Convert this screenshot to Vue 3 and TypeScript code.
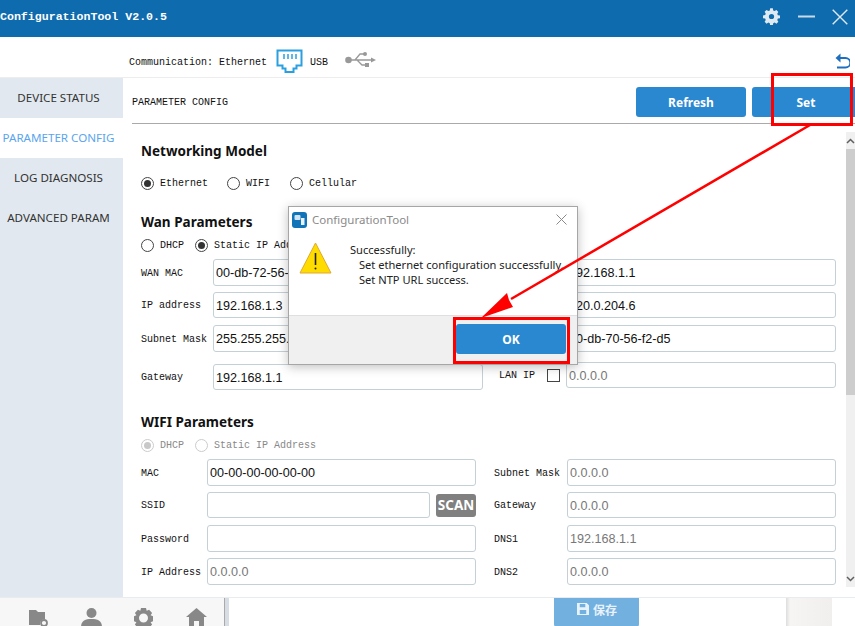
<script setup lang="ts">
interface Field { label: string; value: string; muted?: boolean; top: number; h: number; check?: boolean; scan?: boolean }
const nav = ['DEVICE STATUS', 'PARAMETER CONFIG', 'LOG DIAGNOSIS', 'ADVANCED PARAM']
const wanLeft: Field[] = [
  { label: 'WAN MAC', value: '00-db-72-56-f2-d5', top: 0, h: 27 },
  { label: 'IP address', value: '192.168.1.3', top: 6, h: 26 },
  { label: 'Subnet Mask', value: '255.255.255.0', top: 7, h: 27 },
  { label: 'Gateway', value: '192.168.1.1', top: 12, h: 26 },
]
const wanRight: Field[] = [
  { label: 'Gateway', value: '192.168.1.1', top: 0, h: 27 },
  { label: 'DNS', value: '120.0.204.6', top: 6, h: 26 },
  { label: 'MAC', value: '00-db-70-56-f2-d5', top: 7, h: 27 },
  { label: 'LAN IP', value: '0.0.0.0', muted: true, top: 10, h: 26, check: true },
]
const wifiLeft: Field[] = [
  { label: 'MAC', value: '00-00-00-00-00-00', top: 0, h: 27 },
  { label: 'SSID', value: '', top: 6, h: 26, scan: true },
  { label: 'Password', value: '', top: 7, h: 27 },
  { label: 'IP Address', value: '0.0.0.0', muted: true, top: 6, h: 27 },
]
const wifiRight: Field[] = [
  { label: 'Subnet Mask', value: '0.0.0.0', muted: true, top: 0, h: 27 },
  { label: 'Gateway', value: '0.0.0.0', muted: true, top: 6, h: 26 },
  { label: 'DNS1', value: '192.168.1.1', muted: true, top: 7, h: 27 },
  { label: 'DNS2', value: '0.0.0.0', muted: true, top: 6, h: 27 },
]
const columns = [
  { cls: 'wan-left', rows: wanLeft },
  { cls: 'wan-right', rows: wanRight },
]
const wifiColumns = [
  { cls: 'wifi-left', rows: wifiLeft },
  { cls: 'wifi-right', rows: wifiRight },
]
</script>

<template>
  <div class="app">
    <header class="title">
      <span class="title-text">ConfigurationTool V2.0.5</span>
      <div class="win-icons">
        <svg class="gear" width="17" height="17" viewBox="0 0 24 24"><path fill="#dfe9f2" fill-rule="evenodd" d="M13.900 .5l.5 3 2 .9 2.600-1.600 2.700 2.700-1.600 2.600.9 2 3 .5v3.800l-3 .5-.9 2 1.600 2.600-2.700 2.700-2.600-1.600-2 .9-.5 3h-3.800l-.5-3-2-.9L5 22.100l-2.700-2.700 1.600-2.600-.9-2-3-.5V10.500l3-.5.9-2L2.300 5.400 5 2.700l2.600 1.600 2-.9.5-3z M12 8.300a3.700 3.700 0 1 0 0 7.400 3.700 3.700 0 0 0 0-7.400z"/></svg>
        <svg width="17" height="3" viewBox="0 0 17 3"><rect width="17" height="2" y="0.500" fill="#c9dbea"/></svg>
        <svg width="16" height="16" viewBox="0 0 16 16"><path d="M.7.7l14.600 14.600M15.300.7L.7 15.300" stroke="#dfe9f2" stroke-width="1.400" fill="none"/></svg>
      </div>
    </header>

    <div class="comm">
      <span class="mono comm-label">Communication: Ethernet</span>
      <svg class="eth" width="27" height="25" viewBox="0 0 27 25"><path d="M1.500 1.500h24v15h-5v3h-3v3.500h-8v-3.500h-3v-3h-5z" fill="none" stroke="#2aa0e0" stroke-width="2"/><path d="M8 5v5M12 5v5M16 5v5M20 5v5" stroke="#2aa0e0" stroke-width="1.500"/></svg>
      <span class="mono usb-label">USB</span>
      <svg class="usb" width="31" height="18" viewBox="0 0 31 18"><circle cx="3.500" cy="9" r="3.300" fill="#999"/><path d="M3 9h25M10 9l5-6h4M12 9l5 5h4" stroke="#999" stroke-width="1.300" fill="none"/><circle cx="20" cy="3" r="2" fill="#999"/><rect x="20" y="12" width="4" height="4" fill="#999"/><path d="M26 6.500l5 2.500-5 2.500z" fill="#999"/></svg>
      <svg class="undo" width="15" height="16" viewBox="0 0 15 16"><path d="M3 5h7.500a3.700 3.700 0 0 1 0 9.500H2" stroke="#1f6fc0" stroke-width="1.800" fill="none"/><path d="M5.500 .5L.5 5l5 4.500z" fill="#1f6fc0"/></svg>
    </div>

    <div class="body">
      <nav class="side">
        <div v-for="(n, i) in nav" :key="n" class="nav-item" :class="{ active: i === 1 }">{{ n }}</div>
      </nav>
      <main class="main">
        <div class="main-head">
          <span class="mono head-label">PARAMETER CONFIG</span>
          <button class="btn refresh">Refresh</button>
          <button class="btn set">Set</button>
        </div>
        <div class="scroll">
          <div class="form">
            <h3 class="h-net">Networking Model</h3>
            <div class="radios net">
              <label class="radio on r-eth"><i></i>Ethernet</label>
              <label class="radio r-wifi"><i></i>WIFI</label>
              <label class="radio"><i></i>Cellular</label>
            </div>
            <h3 class="h-wan">Wan Parameters</h3>
            <div class="radios wan-r">
              <label class="radio r-dhcp"><i></i>DHCP</label>
              <label class="radio on"><i></i>Static IP Address</label>
            </div>
            <div class="cols wan">
              <div v-for="c in columns" :key="c.cls" class="col" :class="c.cls">
                <div v-for="r in c.rows" :key="r.label" class="row" :style="{ marginTop: r.top + 'px', height: r.h + 'px' }">
                  <span class="mono lbl">{{ r.label }}</span>
                  <span v-if="r.check" class="check"></span>
                  <div class="inp" :class="{ muted: r.muted }">{{ r.value }}</div>
                </div>
              </div>
            </div>
            <h3 class="h-wifi">WIFI Parameters</h3>
            <div class="radios wifi-r disabled">
              <label class="radio on r-dhcp2"><i></i>DHCP</label>
              <label class="radio"><i></i>Static IP Address</label>
            </div>
            <div class="cols wifi">
              <div v-for="c in wifiColumns" :key="c.cls" class="col" :class="c.cls">
                <div v-for="r in c.rows" :key="r.label" class="row" :style="{ marginTop: r.top + 'px', height: r.h + 'px' }">
                  <span class="mono lbl">{{ r.label }}</span>
                  <div class="inp" :class="{ muted: r.muted }">{{ r.value }}</div>
                  <span v-if="r.scan" class="scan">SCAN</span>
                </div>
              </div>
            </div>
          </div>
          <div class="scrollbar">
            <div class="sb-btn"><svg width="9" height="6" viewBox="0 0 9 6"><path d="M1 5l3.500-3.500L8 5" stroke="#606060" stroke-width="1.500" fill="none"/></svg></div>
            <div class="sb-track"><div class="sb-thumb"></div></div>
            <div class="sb-btn"><svg width="9" height="6" viewBox="0 0 9 6"><path d="M1 1l3.500 3.500L8 1" stroke="#606060" stroke-width="1.500" fill="none"/></svg></div>
          </div>
        </div>
      </main>
    </div>

    <footer class="foot">
      <div class="foot-left">
        <svg width="21" height="19" viewBox="0 0 21 19"><path d="M1 2h7l2 2h7v7a5 5 0 0 0-5 6H1z" fill="#888"/><circle cx="16" cy="15" r="3" fill="none" stroke="#888" stroke-width="1.800"/></svg>
        <svg width="21" height="19" viewBox="0 0 21 19"><circle cx="10.500" cy="5" r="5" fill="#888"/><path d="M0 19c0-6 4-8 10.500-8S21 13 21 19z" fill="#888"/></svg>
        <svg width="21" height="19" viewBox="0 0 21 19"><path fill="#888" fill-rule="evenodd" d="M8 0h5l.7 2.700 2.400-1 3 3.300-1.500 2.300 2.400 1v5l-2.400 1 1.500 2.300-3 3.400H4.900l-3-3.400 1.500-2.300-2.400-1V8.300l2.400-1L1.900 5l3-3.300 2.400 1z M10.500 5.500a4.500 4.500 0 1 0 0 9 4.500 4.500 0 0 0 0-9z"/></svg>
        <svg width="21" height="19" viewBox="0 0 21 19"><path d="M10.500 0L21 9h-3v10h-5v-6H8v6H3V9H0z" fill="#888"/></svg>
      </div>
      <div class="foot-strip"></div>
      <div class="foot-mid">
        <button class="save">
          <svg width="12" height="12" viewBox="0 0 13 13"><path fill="#e8f2fa" fill-rule="evenodd" d="M0 0h10.500L13 2.500V13H0z M3 1v3.500h6V1z M3 7.500V12h7V7.500z"/></svg>
          <span>保存</span>
        </button>
      </div>
      <div class="foot-blob"></div>
    </footer>

    <section class="dialog">
      <div class="dlg-title">
        <svg width="15" height="16" viewBox="0 0 15 16"><rect width="15" height="16" rx="3" fill="#1173b8"/><rect x="2.500" y="3" width="6" height="5" rx="1" fill="#cfe3f2"/><rect x="9" y="6" width="3.500" height="7" fill="#e8f2fa"/></svg>
        <span class="dlg-name">ConfigurationTool</span>
        <svg class="dlg-x" width="11" height="11" viewBox="0 0 11 11"><path d="M.5.5l10 10M10.500.5l-10 10" stroke="#8a8a8a" stroke-width="1" fill="none"/></svg>
      </div>
      <div class="dlg-body">
        <svg width="33" height="32" viewBox="0 0 33 32"><path d="M16.500 1L32 31H1z" fill="#ffdc00" stroke="#e0a830" stroke-width="1"/><path d="M16.500 11v12" stroke="#222" stroke-width="1.600"/><circle cx="16.500" cy="26.500" r="1" fill="#222"/></svg>
        <div class="dlg-msg">
          <div>Successfully:</div>
          <div class="ind">Set ethernet configuration successfully.</div>
          <div class="ind">Set NTP URL success.</div>
        </div>
      </div>
      <div class="dlg-foot"><button class="btn ok">OK</button></div>
    </section>

    <svg class="marks" width="855" height="626" viewBox="0 0 855 626">
      <rect x="772.500" y="74.500" width="79" height="50" fill="none" stroke="#f00" stroke-width="3"/>
      <rect x="454.500" y="318.500" width="114" height="44" fill="none" stroke="#f00" stroke-width="3"/>
      <path d="M810 125L511 299" stroke="#f00" stroke-width="2.500" fill="none"/>
      <path d="M481 318L507 293L509 300L513 307z" fill="#f00"/>
    </svg>
  </div>
</template>

<style>
html, body { margin: 0; background: #fff; overflow: hidden; }
</style>

<style scoped>
.app { position: relative; width: 855px; height: 626px; overflow: hidden; background: #fff; font-family: "Noto Sans", sans-serif; display: flex; flex-direction: column; color: #111; }
.mono { font-family: "Liberation Mono", monospace; font-size: 10px; }
.title { height: 37px; background: #0e6bae; display: flex; align-items: center; justify-content: space-between; flex: none; }
.title-text { font: bold 11.600px "Liberation Mono", monospace; color: #fff; margin-top: -4px; }
.win-icons { display: flex; align-items: center; gap: 17px; padding-right: 7px; margin-top: -4px; }
.win-icons svg:nth-child(2) { margin-left: 1px; }
.comm { height: 41px; flex: none; border-bottom: 1px solid #ededed; display: flex; align-items: center; padding: 10px 0 0 129px; box-sizing: border-box; position: relative; }
.comm-label { width: 147px; margin-top: 1px; }
.eth { margin-right: 7px; margin-top: -1px; }
.usb-label { width: 35px; }
.usb { margin-top: -4px; }
.undo { margin-left: auto; margin-right: 5px; margin-top: -3px; }
.body { flex: 1; min-height: 0; display: flex; }
.side { width: 123px; flex: none; background: #e1e8ef; }
.nav-item { height: 40px; display: flex; align-items: center; justify-content: center; font-size: 11.600px; color: #333; padding: 0 6px 1px 0; box-sizing: border-box; white-space: nowrap; }
.nav-item.active { background: #fff; color: #5aa5ee; }
.main { flex: 1; min-width: 0; display: flex; flex-direction: column; }
.main-head { height: 46px; margin-left: 9px; border-bottom: 1px solid #aaa; display: flex; align-items: center; flex: none; padding-top: 3px; box-sizing: border-box; }
.head-label { margin-right: auto; }
.btn { border: none; background: #2a88d0; color: #fff; font: bold 12px "Noto Sans", sans-serif; border-radius: 3px; padding: 0; }
.refresh { width: 110px; height: 30px; margin-right: 6px; }
.set { width: 108px; height: 30px; flex: none; margin-right: -5px; }
.scroll { flex: 1; min-height: 0; display: flex; }
.form { width: 723px; padding-left: 18px; box-sizing: border-box; flex: none; }
h3 { margin: 0; font-size: 13.500px; font-weight: 700; color: #111; height: 20px; line-height: 20px; }
.h-net { margin-top: 17px; }
.radios { display: flex; align-items: center; font: 10px "Liberation Mono", monospace; height: 14px; }
.net { margin-top: 15px; }
.radio { display: flex; align-items: center; gap: 6px; }
.radio i { width: 11px; height: 11px; border: 1px solid #444; border-radius: 50%; background: #fff; position: relative; display: block; }
.radio.on i::after { content: ""; position: absolute; left: 2px; top: 2px; width: 7px; height: 7px; border-radius: 50%; background: #333; }
.r-eth { margin-right: 19px; }
.r-wifi { margin-right: 20px; }
.h-wan { margin-top: 22px; }
.wan-r { margin-top: 6px; }
.r-dhcp { margin-right: 11px; }
.cols { display: flex; }
.wan { margin-top: 7px; }
.col { flex: none; }
.row { display: flex; align-items: center; }
.lbl { white-space: nowrap; padding-top: 1px; }
.inp { height: 100%; box-sizing: border-box; border: 1px solid #c3d0d5; border-radius: 3px; padding-left: 2px; font: 12.600px/26px "Liberation Sans", sans-serif; color: #111; background: #fff; white-space: nowrap; overflow: hidden; }
.inp.muted { color: #777; }
.wan-left { width: 358px; }
.wan-left .lbl { width: 72px; flex: none; }
.wan-left .inp { width: 270px; }
.wan-right .lbl { width: 67px; flex: none; }
.wan-right .inp { width: 270px; margin-left: auto; }
.wan-right { width: 337px; }
.wan-right .row:last-child .lbl { width: 48px; }
.check { width: 11px; height: 11px; border: 1px solid #444; flex: none; }
.wan-right .row:last-child .inp { margin-left: 6px; }
.h-wifi { margin-top: 22px; }
.wifi-r { margin-top: 6px; }
.disabled { color: #888; }
.disabled .radio i { border-color: #ccc; }
.disabled .radio.on i::after { background: #c8c8c8; }
.r-dhcp2 { margin-right: 11px; }
.wifi { margin-top: 7px; }
.wifi-left { width: 353px; }
.wifi-left .lbl { width: 66px; flex: none; }
.wifi-left .inp { width: 269px; }
.wifi-left .row:nth-child(2) .inp { width: 223px; }
.scan { width: 40px; height: 23px; margin-left: 6px; background: #808080; color: #fff; border-radius: 3px; font: bold 13.500px/23px "Noto Sans", sans-serif; display: flex; justify-content: center; flex: none; overflow: hidden; }
.wifi-right { width: 342px; }
.wifi-right .lbl { width: 73px; flex: none; }
.wifi-right .inp { width: 269px; }
.scrollbar { width: 9px; margin-top: 8px; margin-bottom: 10px; display: flex; flex-direction: column; background: #f0f0f0; flex: none; }
.sb-btn { height: 17px; display: flex; align-items: center; justify-content: center; flex: none; }
.sb-track { flex: 1; }
.sb-thumb { height: 246px; background: #cdcdcd; }
.foot { height: 29px; flex: none; border-top: 1px solid #e8ecef; display: flex; position: relative; overflow: hidden; box-sizing: border-box; }
.foot-left { width: 225px; box-sizing: border-box; background: #f7f7f7; border-top: 1px solid #aaa; border-right: 1px solid #aaa; display: flex; gap: 31.700px; padding: 10px 0 0 28px; margin-top: -1px; height: 30px; }
.foot-left svg { flex: none; }
.foot-strip { width: 4px; background: #d6dde5; margin-top: -1px; }
.foot-mid { width: 559px; box-sizing: border-box; padding-left: 325px; }
.save { width: 85px; height: 29px; background: #72b0e0; border: none; border-radius: 0 0 3px 3px; color: #e8f2fa; display: flex; align-items: center; justify-content: center; gap: 4px; font: bold 12px "Noto Sans CJK SC", sans-serif; padding: 0 0 7px 1px; box-sizing: border-box; }
.foot-blob { width: 46px; margin-left: -2px; background: linear-gradient(90deg, #ddd 0, #f6f5f3 4px, #f0efed 100%); }
.dialog { position: absolute; left: 288px; top: 206px; width: 290px; height: 159px; box-sizing: border-box; background: #fff; border: 1px solid #a6a6a6; box-shadow: 0 2px 10px rgba(0,0,0,.25); display: flex; flex-direction: column; }
.dlg-title { height: 25px; display: flex; align-items: center; padding: 0 10px 0 3px; gap: 5px; flex: none; }
.dlg-name { font-size: 11.500px; color: #8a8a8a; }
.dlg-x { margin-left: auto; }
.dlg-body { flex: 1; display: flex; padding: 10px 0 0 10px; gap: 18px; }
.dlg-msg { font-size: 11.100px; line-height: 15px; color: #222; }
.ind { padding-left: 9px; white-space: nowrap; }
.dlg-foot { height: 49px; background: #f0f0f0; border-top: 1px solid #dfdfdf; display: flex; justify-content: flex-end; padding: 8px 11px 0 0; box-sizing: border-box; flex: none; }
.ok { width: 110px; height: 30px; }
.marks { position: absolute; left: 0; top: 0; pointer-events: none; }
</style>
